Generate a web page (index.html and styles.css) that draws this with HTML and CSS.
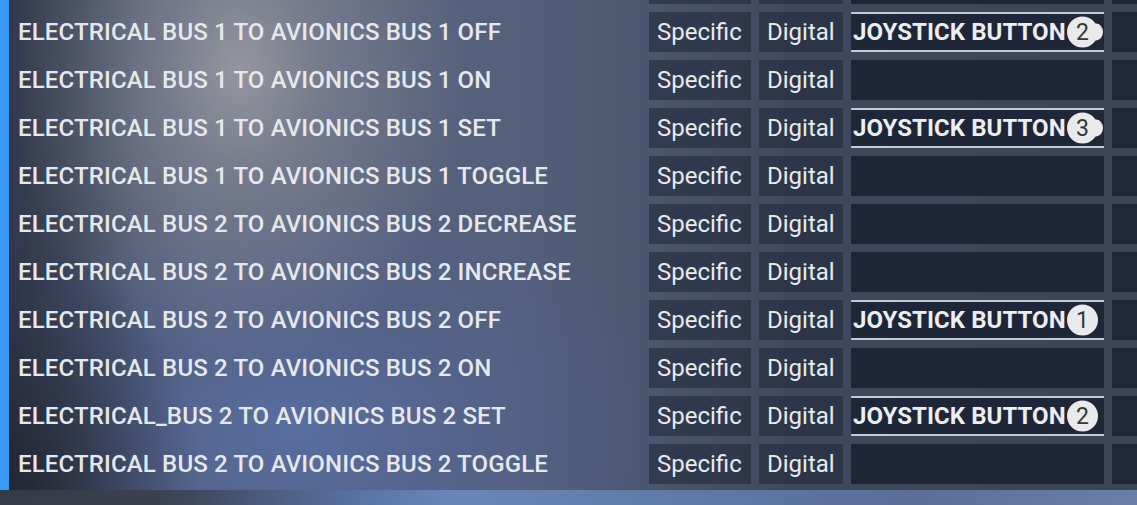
FILE: index.html
```html
<!DOCTYPE html>
<html>
<head>
<meta charset="utf-8">
<link rel="stylesheet" href="styles.css">
</head>
<body>
<div class="screen">
  <div class="panel">
    <div class="accent"></div>
    <div class="list">
      <div class="row row-partial">
        <div class="label"></div>
        <div class="cell"></div>
        <div class="cell"></div>
        <div class="bind"></div>
        <div class="extra"></div>
      </div>
      <div class="row">
        <div class="label">ELECTRICAL BUS 1 TO AVIONICS BUS 1 OFF</div>
        <div class="cell">Specific</div>
        <div class="cell">Digital</div>
        <div class="bind set">JOYSTICK BUTTON<span class="badge multi">2</span></div>
        <div class="extra"></div>
      </div>
      <div class="row">
        <div class="label">ELECTRICAL BUS 1 TO AVIONICS BUS 1 ON</div>
        <div class="cell">Specific</div>
        <div class="cell">Digital</div>
        <div class="bind"></div>
        <div class="extra"></div>
      </div>
      <div class="row">
        <div class="label">ELECTRICAL BUS 1 TO AVIONICS BUS 1 SET</div>
        <div class="cell">Specific</div>
        <div class="cell">Digital</div>
        <div class="bind set">JOYSTICK BUTTON<span class="badge multi">3</span></div>
        <div class="extra"></div>
      </div>
      <div class="row">
        <div class="label">ELECTRICAL BUS 1 TO AVIONICS BUS 1 TOGGLE</div>
        <div class="cell">Specific</div>
        <div class="cell">Digital</div>
        <div class="bind"></div>
        <div class="extra"></div>
      </div>
      <div class="row">
        <div class="label">ELECTRICAL BUS 2 TO AVIONICS BUS 2 DECREASE</div>
        <div class="cell">Specific</div>
        <div class="cell">Digital</div>
        <div class="bind"></div>
        <div class="extra"></div>
      </div>
      <div class="row">
        <div class="label">ELECTRICAL BUS 2 TO AVIONICS BUS 2 INCREASE</div>
        <div class="cell">Specific</div>
        <div class="cell">Digital</div>
        <div class="bind"></div>
        <div class="extra"></div>
      </div>
      <div class="row">
        <div class="label">ELECTRICAL BUS 2 TO AVIONICS BUS 2 OFF</div>
        <div class="cell">Specific</div>
        <div class="cell">Digital</div>
        <div class="bind set">JOYSTICK BUTTON<span class="badge">1</span></div>
        <div class="extra"></div>
      </div>
      <div class="row">
        <div class="label">ELECTRICAL BUS 2 TO AVIONICS BUS 2 ON</div>
        <div class="cell">Specific</div>
        <div class="cell">Digital</div>
        <div class="bind"></div>
        <div class="extra"></div>
      </div>
      <div class="row">
        <div class="label">ELECTRICAL_BUS 2 TO AVIONICS BUS 2 SET</div>
        <div class="cell">Specific</div>
        <div class="cell">Digital</div>
        <div class="bind set">JOYSTICK BUTTON<span class="badge">2</span></div>
        <div class="extra"></div>
      </div>
      <div class="row">
        <div class="label">ELECTRICAL BUS 2 TO AVIONICS BUS 2 TOGGLE</div>
        <div class="cell">Specific</div>
        <div class="cell">Digital</div>
        <div class="bind"></div>
        <div class="extra"></div>
      </div>
    </div>
  </div>
  <div class="footer"></div>
</div>
</body>
</html>
```
FILE: styles.css
```css
html, body {
  margin: 0;
  padding: 0;
  width: 1137px;
  height: 505px;
  overflow: hidden;
}
body {
  font-family: Roboto, "Liberation Sans", sans-serif;
  color: #e8eaee;
  background: #2f3441;
}
.screen {
  width: 1137px;
  height: 505px;
  display: flex;
  flex-direction: column;
  overflow: hidden;
  background:
    radial-gradient(ellipse 230px 300px at 240px 70px, rgba(152,152,160,0.95) 0%, rgba(138,140,152,0.6) 35%, rgba(110,118,140,0) 100%),
    radial-gradient(ellipse 380px 240px at 300px 430px, rgba(88,112,164,0.9) 0%, rgba(80,100,150,0.45) 50%, rgba(70,90,130,0) 100%),
    linear-gradient(90deg, #3c4458 0%, #56617c 18%, #55607b 45%, #3e4960 70%, #3a4556 100%);
}
.panel {
  height: 490px;
  display: flex;
  overflow: hidden;
  background:
    radial-gradient(ellipse 200px 260px at 0px 490px, rgba(30,34,44,0.85) 0%, rgba(30,34,44,0) 100%),
    linear-gradient(90deg, rgba(20,24,36,0.3) 0%, rgba(20,24,36,0) 12%);
}
.accent {
  width: 9px;
  flex: none;
  background: #3b98f6;
}
.list {
  flex: 1;
  display: flex;
  flex-direction: column;
  gap: 8px;
  margin-top: -36px;
}
.row {
  display: grid;
  grid-template-columns: 632px 102px 84px 253px 40px;
  column-gap: 8px;
  height: 40px;
  flex: none;
}
.label {
  padding-left: 9px;
  display: flex;
  align-items: center;
  font-size: 24px;
  font-weight: 500;
  letter-spacing: 0.15px;
  white-space: nowrap;
  color: #e6e8ec;
}
.cell {
  background: rgba(36,44,60,0.62);
  display: flex;
  align-items: center;
  padding-left: 8px;
  font-size: 24px;
  font-weight: 400;
  color: #e8eaee;
}
.bind {
  background: #1f2638;
  display: flex;
  align-items: center;
  padding-left: 2px;
  font-size: 24px;
  font-weight: 700;
  letter-spacing: 0.05px;
  color: #eceef2;
  position: relative;
  box-sizing: border-box;
  white-space: nowrap;
  overflow: hidden;
}
.bind.set {
  border-top: 2px solid #c4c9d3;
  border-bottom: 2px solid #c4c9d3;
}
.extra {
  background: #1f2739;
}
.badge {
  position: absolute;
  left: 216px;
  top: 50%;
  transform: translateY(-50%);
  width: 31px;
  height: 31px;
  border-radius: 50%;
  background: #e9eaec;
  color: #33363c;
  font-size: 23px;
  font-weight: 400;
  letter-spacing: 0;
  display: flex;
  align-items: center;
  justify-content: center;
}
.badge.multi::after {
  content: "";
  position: absolute;
  right: -5px;
  top: 7px;
  width: 14px;
  height: 17px;
  border-radius: 50%;
  background: #e9eaec;
  z-index: -1;
}
.footer {
  flex: 1;
  background: linear-gradient(90deg, #353a47 0%, #3a4150 14%, #5a74a6 32%, #6a86b8 40%, #5f79a8 60%, #5a6e98 80%, #6a7fa8 100%);
}
```
